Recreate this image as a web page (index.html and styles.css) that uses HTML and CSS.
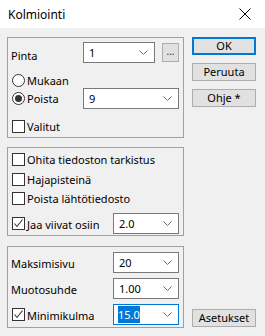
FILE: index.html
```html
<!DOCTYPE html>
<html lang="fi">
<head>
    <meta charset="UTF-8">
    <title>Kolmiointi</title>
    <link rel="stylesheet" href="styles.css">
</head>
<body>
    <div class="window">
        <div class="titlebar">
            <span class="title">Kolmiointi</span>
            <svg class="close" width="12" height="12" viewBox="0 0 12 12">
                <path d="M0.5 0.5 L11.5 11.5 M11.5 0.5 L0.5 11.5" stroke="#000" stroke-width="1" fill="none"/>
            </svg>
        </div>

        <div class="content">
            <div class="left">
                <div class="group g1">
                    <div class="row r-pinta">
                        <span class="label">Pinta</span>
                        <div class="combo c-short"><span class="val">1</span><svg class="chev" width="9" height="5" viewBox="0 0 9 5"><polyline points="0.5,0.5 4.5,4.5 8.5,0.5" fill="none" stroke="#6d6d6d"/></svg></div>
                        <div class="dots">...</div>
                    </div>
                    <div class="row r-mukaan">
                        <span class="radio"></span><span class="label">Mukaan</span>
                    </div>
                    <div class="row r-poista">
                        <span class="radio on"></span><span class="label">Poista</span>
                        <div class="combo c-long"><span class="val">9</span><svg class="chev" width="9" height="5" viewBox="0 0 9 5"><polyline points="0.5,0.5 4.5,4.5 8.5,0.5" fill="none" stroke="#6d6d6d"/></svg></div>
                    </div>
                    <div class="row r-valitut">
                        <span class="check"></span><span class="label">Valitut</span>
                    </div>
                </div>

                <div class="group g2">
                    <div class="row r-ohita">
                        <span class="check"></span><span class="label">Ohita tiedoston tarkistus</span>
                    </div>
                    <div class="row r-haja">
                        <span class="check"></span><span class="label">Hajapisteinä</span>
                    </div>
                    <div class="row r-lahto">
                        <span class="check"></span><span class="label">Poista lähtötiedosto</span>
                    </div>
                    <div class="row r-jaa">
                        <span class="check on"><svg width="11" height="11" viewBox="0 0 11 11"><polyline points="1.5,5.5 4,8.5 9.5,1.5" fill="none" stroke="#333" stroke-width="1.1"/></svg></span><span class="label">Jaa viivat osiin</span>
                        <div class="combo c-mid"><span class="val">2.0</span><svg class="chev" width="9" height="5" viewBox="0 0 9 5"><polyline points="0.5,0.5 4.5,4.5 8.5,0.5" fill="none" stroke="#6d6d6d"/></svg></div>
                    </div>
                </div>

                <div class="group g3">
                    <div class="row r-maks">
                        <span class="label">Maksimisivu</span>
                        <div class="combo c-mid"><span class="val">20</span><svg class="chev" width="9" height="5" viewBox="0 0 9 5"><polyline points="0.5,0.5 4.5,4.5 8.5,0.5" fill="none" stroke="#6d6d6d"/></svg></div>
                    </div>
                    <div class="row r-muoto">
                        <span class="label">Muotosuhde</span>
                        <div class="combo c-mid"><span class="val">1.00</span><svg class="chev" width="9" height="5" viewBox="0 0 9 5"><polyline points="0.5,0.5 4.5,4.5 8.5,0.5" fill="none" stroke="#6d6d6d"/></svg></div>
                    </div>
                    <div class="row r-mini">
                        <span class="check on"><svg width="11" height="11" viewBox="0 0 11 11"><polyline points="1.5,5.5 4,8.5 9.5,1.5" fill="none" stroke="#333" stroke-width="1.1"/></svg></span><span class="label">Minimikulma</span>
                        <div class="combo c-mid focus"><span class="val sel">15.0</span><svg class="chev" width="9" height="5" viewBox="0 0 9 5"><polyline points="0.5,0.5 4.5,4.5 8.5,0.5" fill="none" stroke="#6d6d6d"/></svg></div>
                    </div>
                </div>
            </div>

            <div class="right">
                <div class="btn default">OK</div>
                <div class="btn">Peruuta</div>
                <div class="btn">Ohje *</div>
                <div class="btn bottom">Asetukset</div>
            </div>
        </div>
    </div>
</body>
</html>
```

FILE: styles.css
```css
* {
    box-sizing: border-box;
}
body {
    margin: 0;
    font-family: 'Noto Sans', 'Liberation Sans', sans-serif;
    font-size: 11px;
    color: #000;
    background: #f0f0f0;
}
.window {
    width: 265px;
    height: 336px;
    background: #f0f0f0;
}
.titlebar {
    height: 28px;
    background: #fff;
    display: flex;
    align-items: center;
    justify-content: space-between;
    padding: 0 14px 0 8px;
}
.title {
    font-size: 12px;
}
.close {
    display: block;
}
.content {
    display: flex;
    padding: 9px 0 0 7px;
}
.left {
    width: 177px;
}
.group {
    border: 1px solid #a0a0a0;
    padding: 0 4px 0 3px;
}
.g1 {
    height: 101px;
    padding-top: 4px;
}
.g2 {
    height: 89px;
    margin-top: 9px;
    padding-top: 3px;
}
.g3 {
    height: 82px;
    margin-top: 10px;
    padding-top: 5px;
}
.row {
    display: flex;
    align-items: center;
    height: 16px;
}
.label {
    white-space: nowrap;
    padding-top: 1px;
}
.r-pinta {
    height: 21px;
}
.r-pinta .label {
    padding-top: 6px;
}
.r-mukaan {
    margin-top: 9px;
}
.r-poista {
    height: 20px;
}
.r-valitut {
    margin-top: 10px;
}
.r-haja {
    margin-top: 4px;
}
.r-lahto {
    margin-top: 3px;
}
.r-jaa {
    height: 21px;
    margin-top: 7px;
}
.r-maks, .r-muoto, .r-mini {
    height: 21px;
}
.r-muoto, .r-mini {
    margin-top: 5px;
}
.combo {
    margin-left: auto;
    height: 21px;
    background: #fff;
    border: 1px solid #7a7a7a;
    display: flex;
    align-items: center;
    justify-content: space-between;
    padding: 0 6px 0 5px;
}
.combo.focus {
    border-color: #0078d7;
}
.c-short {
    width: 72px;
}
.c-long {
    width: 96px;
}
.c-mid {
    width: 66px;
}
.val.sel {
    background: #0078d7;
    color: #fff;
    padding: 1px 0;
    margin-left: -1px;
}
.chev {
    display: block;
}
.dots {
    width: 17px;
    height: 19px;
    margin-left: 7px;
    background: #e1e1e1;
    border: 1px solid #adadad;
    font-size: 10px;
    line-height: 14px;
    text-align: center;
    color: #333;
}
.radio {
    width: 13px;
    height: 13px;
    border: 1px solid #333;
    border-radius: 50%;
    background: #fff;
    margin: 0 2px 0 1px;
    display: flex;
    align-items: center;
    justify-content: center;
}
.radio.on::after {
    content: "";
    width: 7px;
    height: 7px;
    border-radius: 50%;
    background: #333;
}
.check {
    width: 13px;
    height: 13px;
    border: 1px solid #333;
    background: #fff;
    margin: 0 2px 0 1px;
    display: flex;
    align-items: center;
    justify-content: center;
}
.check svg {
    display: block;
}
.right {
    margin-left: 8px;
    width: 64px;
    display: flex;
    flex-direction: column;
}
.btn {
    height: 18px;
    background: #e1e1e1;
    border: 1px solid #adadad;
    text-align: center;
    line-height: 16px;
    margin-bottom: 8px;
}
.btn.default {
    border: 2px solid #0078d7;
    line-height: 14px;
}
.btn.bottom {
    margin-top: 194px;
}
```
